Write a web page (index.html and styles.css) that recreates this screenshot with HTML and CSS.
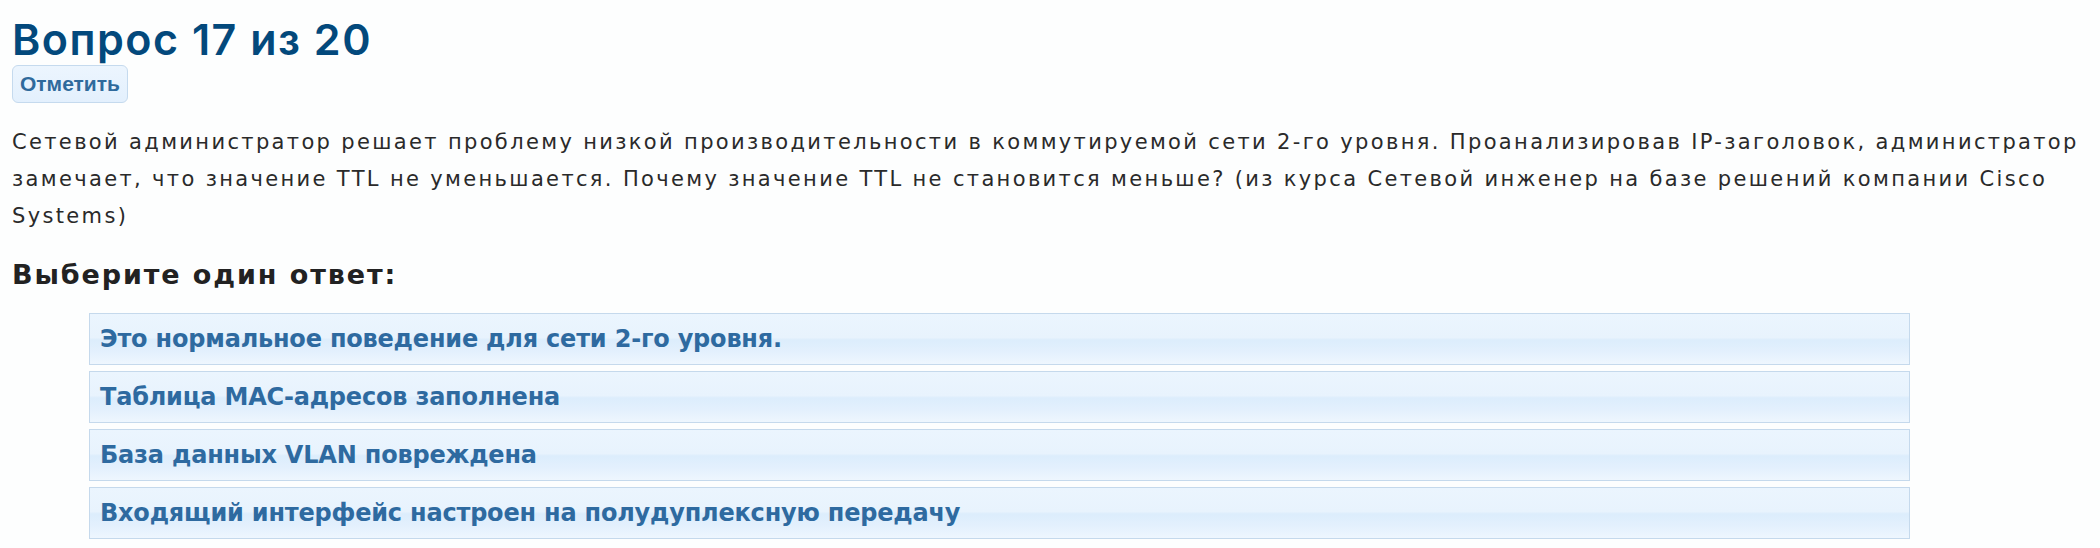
FILE: index.html
```html
<!DOCTYPE html>
<html lang="ru">
<head>
<meta charset="utf-8">
<title>Вопрос 17 из 20</title>
<link rel="stylesheet" href="styles.css">
</head>
<body>
<div class="page">
  <h1 class="title">Вопрос 17 из 20</h1>
  <button class="flag" type="button">Отметить</button>
  <p class="question">Сетевой администратор решает проблему низкой производительности в коммутируемой сети 2-го уровня. Проанализировав IP-заголовок, администратор<br>замечает, что значение TTL не уменьшается. Почему значение TTL не становится меньше? (из курса Сетевой инженер на базе решений компании Cisco<br>Systems)</p>
  <h2 class="prompt">Выберите один ответ:</h2>
  <div class="answers">
    <div class="answer">Это нормальное поведение для сети 2-го уровня.</div>
    <div class="answer">Таблица МАС-адресов заполнена</div>
    <div class="answer">База данных VLAN повреждена</div>
    <div class="answer">Входящий интерфейс настроен на полудуплексную передачу</div>
  </div>
</div>
</body>
</html>
```

FILE: styles.css
```css
html, body {
  margin: 0;
  padding: 0;
  background: #fdfefe;
}

.page {
  padding: 0 12px;
  font-family: "DejaVu Sans", Inter, sans-serif;
}

.title {
  margin: 0;
  padding-top: 14px;
  font-family: Inter, "DejaVu Sans", sans-serif;
  font-size: 43px;
  line-height: 50px;
  font-weight: 600;
  color: #03497c;
  letter-spacing: 1.5px;
}

.flag {
  display: block;
  margin: 1px 0 0 0;
  padding: 6px 7px;
  height: 38px;
  font-family: "Liberation Sans", Arial, sans-serif;
  font-weight: 700;
  font-size: 21px;
  line-height: 24px;
  color: #2f6a9c;
  background: linear-gradient(#ecf5fe, #e3f0fd);
  border: 1px solid #c5daee;
  border-radius: 6px;
}

.question {
  margin: 21px 0 0 0;
  font-size: 21px;
  line-height: 37px;
  color: #2a2a2a;
  white-space: nowrap;
  letter-spacing: 2.35px;
}

.prompt {
  margin: 23px 0 0 0;
  font-size: 27px;
  line-height: 34px;
  font-weight: 700;
  color: #222222;
  letter-spacing: 1.9px;
}

.answers {
  margin: 21px 178px 0 77px;
  display: flex;
  flex-direction: column;
  gap: 6px;
}

.answer {
  height: 30px;
  padding: 10px 10px 10px 10px;
  border: 1px solid #c5d9ec;
  background: linear-gradient(#ebf5fe 0%, #e8f3fd 47%, #dcedfc 52%, #e3f0fd 75%, #eef6fe 100%);
  font-size: 24px;
  line-height: 30px;
  font-weight: 700;
  color: #2e6aa0;
  letter-spacing: -0.2px;
}
```
